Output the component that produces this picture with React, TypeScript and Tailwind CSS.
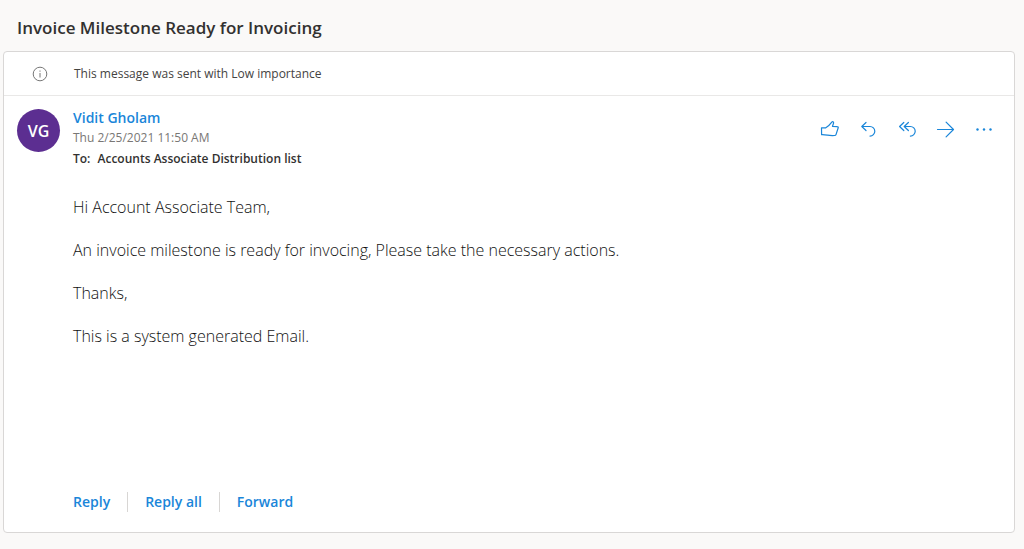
import type { ReactNode } from "react";

const FONT = "font-['Open_Sans','Noto_Sans',sans-serif]";

function IconButton({ label, children }: { label: string; children: ReactNode }) {
  return (
    <button type="button" aria-label={label} className="flex h-6 w-6 items-center justify-center text-[#1a86d9]">
      <svg
        viewBox="0 0 24 24"
        className="h-6 w-6"
        fill="none"
        stroke="currentColor"
        strokeWidth="1.2"
        strokeLinecap="round"
        strokeLinejoin="round"
        aria-hidden="true"
      >
        {children}
      </svg>
    </button>
  );
}

function MessageActions() {
  return (
    <div className="flex gap-[15px] pt-[9px]">
      <IconButton label="Like">
        <path d="M4.500 10.800h4.300c2.500-1.500 4.400-3.400 6-5.600.5-.8 2-.6 1.800.6-.2 1.300-.9 2.400-1.100 3.600l4.700.2c.8 0 1.200.5 1 1.200l-2.200 6.800c-.2.700-.6.900-1.300.9-2.500.1-4.900.1-7.100-.3-2-.3-3.900-.6-6-.5z" />
      </IconButton>
      <IconButton label="Reply">
        <path d="M10 5.500l-4.200 4 4.200 4M5.800 9.500h8.200a4.800 4.800 0 0 1 0 9.600" />
      </IconButton>
      <IconButton label="Reply all">
        <path d="M8.800 5.500l-4.200 4 4.200 4M13.400 5.500l-4.200 4 4.200 4M9.200 9.500h6.200a4.800 4.800 0 0 1 0 9.600" />
      </IconButton>
      <IconButton label="Forward">
        <path d="M3.500 12.500h16M12.100 5.100l7.400 7.400-7.400 7.400" />
      </IconButton>
      <IconButton label="More actions">
        <g fill="currentColor" stroke="none">
          <circle cx="4.500" cy="12.500" r="1.200" />
          <circle cx="11" cy="12.500" r="1.200" />
          <circle cx="17.500" cy="12.500" r="1.200" />
        </g>
      </IconButton>
    </div>
  );
}

export default function App() {
  return (
    <main className={`flex min-h-screen flex-col bg-[#faf9f8] pr-[9px] pb-4 pl-[3px] text-[#323130] ${FONT}`}>
      <h1 className="pt-3.5 pb-[9px] pl-3.5 text-[17px] leading-7 font-semibold">
        Invoice Milestone Ready for Invoicing
      </h1>
      <article className="flex flex-1 flex-col rounded-sm border border-[#d9d7d6] bg-white">
        <div className="flex h-11 items-center border-b border-[#e9e8e7] text-[12px] text-[#444342]">
          <div className="flex w-[70px] justify-center pl-px">
            <svg viewBox="0 0 16 16" className="h-4 w-4" fill="none" stroke="#777" aria-hidden="true">
              <circle cx="8" cy="8" r="6.800" />
              <path d="M8 7v4.500M8 4.500v1.200" />
            </svg>
          </div>
          <p>This message was sent with Low importance</p>
        </div>
        <header className="flex pt-3 pr-[17px] pl-[13px]">
          <div className="mt-px flex h-[43px] w-[43px] items-center justify-center rounded-full bg-[#5c2e91] text-[16px] font-semibold text-white">
            VG
          </div>
          <div className="ml-[13px] flex-1">
            <p className="text-[14px] leading-5 font-semibold text-[#1a86d9]">Vidit Gholam</p>
            <p className="text-[12px] leading-5 text-[#797775]">Thu 2/25/2021 11:50 AM</p>
            <p className="text-[12px] leading-[22px] font-semibold">
              To: <span className="ml-1">Accounts Associate Distribution list</span>
            </p>
          </div>
          <MessageActions />
        </header>
        <div className="flex flex-col gap-[21px] px-[69px] pt-[26px] text-[16px] leading-[22px] font-light text-[#111]">
          <p>Hi Account Associate Team,</p>
          <p>An invoice milestone is ready for invocing, Please take the necessary actions.</p>
          <p>Thanks,</p>
          <p>This is a system generated Email.</p>
        </div>
        <footer className="mt-auto flex items-center pb-5 pl-[69px] text-[14px] leading-5 font-semibold text-[#1a86d9]">
          <button type="button" className="border-r border-[#d8d6d4] pr-[17px]">Reply</button>
          <button type="button" className="border-r border-[#d8d6d4] px-[17px]">Reply all</button>
          <button type="button" className="pl-[17px]">Forward</button>
        </footer>
      </article>
    </main>
  );
}
